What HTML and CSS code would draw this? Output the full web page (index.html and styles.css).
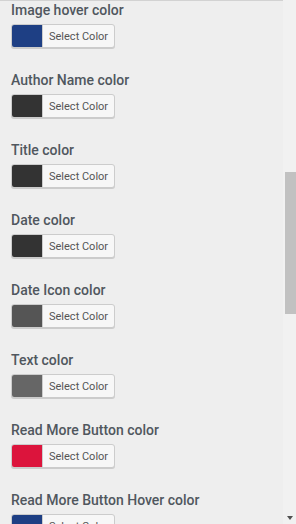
FILE: index.html
```html
<!DOCTYPE html>
<html lang="en">
  <head>
    <meta charset="UTF-8" />
    <meta name="viewport" content="width=device-width, initial-scale=1.0" />
    <title>Color settings</title>
    <link rel="stylesheet" href="styles.css">
  </head>
  <body>
    <div class="settings">
      <div class="field">
        <label class="field-label">Image hover color</label>
        <button class="color-result"><span class="swatch swatch-blue"></span><span class="color-text">Select Color</span></button>
      </div>
      <div class="field">
        <label class="field-label">Author Name color</label>
        <button class="color-result"><span class="swatch swatch-dark"></span><span class="color-text">Select Color</span></button>
      </div>
      <div class="field">
        <label class="field-label">Title color</label>
        <button class="color-result"><span class="swatch swatch-dark"></span><span class="color-text">Select Color</span></button>
      </div>
      <div class="field">
        <label class="field-label">Date color</label>
        <button class="color-result"><span class="swatch swatch-dark"></span><span class="color-text">Select Color</span></button>
      </div>
      <div class="field">
        <label class="field-label">Date Icon color</label>
        <button class="color-result"><span class="swatch swatch-mid"></span><span class="color-text">Select Color</span></button>
      </div>
      <div class="field">
        <label class="field-label">Text color</label>
        <button class="color-result"><span class="swatch swatch-gray"></span><span class="color-text">Select Color</span></button>
      </div>
      <div class="field">
        <label class="field-label">Read More Button color</label>
        <button class="color-result"><span class="swatch swatch-red"></span><span class="color-text">Select Color</span></button>
      </div>
      <div class="field">
        <label class="field-label">Read More Button Hover color</label>
        <button class="color-result"><span class="swatch swatch-blue"></span><span class="color-text">Select Color</span></button>
      </div>
    </div>

    <div class="scrollbar">
      <div class="scroll-thumb"></div>
      <div class="scroll-arrow"></div>
    </div>
  </body>
</html>
```

FILE: styles.css
```css
* {
  margin: 0;
  padding: 0;
  box-sizing: border-box;
}

html,
body {
  height: 100%;
}

body {
  font-family: Roboto, "Noto Sans", sans-serif;
  background: #eeeeee;
  display: flex;
  overflow: hidden;
}

.settings {
  flex: 1;
  border-top: 1px solid #d2d2d2;
  padding: 0 11px;
  display: flex;
  flex-direction: column;
  gap: 23px;
}

.field {
  display: flex;
  flex-direction: column;
  align-items: flex-start;
  gap: 5px;
}

.field-label {
  color: #50575e;
  font-size: 14px;
  font-weight: 500;
  line-height: 18px;
}

.color-result {
  display: flex;
  height: 24px;
  border: 1px solid #cccccc;
  border-radius: 3px;
  background: #f7f7f7;
  box-shadow: 0 1px 0 #cccccc;
  overflow: hidden;
  font-family: inherit;
  cursor: pointer;
}

.swatch {
  width: 30px;
  height: 100%;
}

.swatch-blue {
  background: #1e3f84;
}

.swatch-dark {
  background: #333333;
}

.swatch-mid {
  background: #555555;
}

.swatch-gray {
  background: #666666;
}

.swatch-red {
  background: #dc143c;
}

.color-text {
  display: flex;
  align-items: center;
  padding: 0 6px;
  border-left: 1px solid #cccccc;
  font-size: 11px;
  color: #555555;
}

.scrollbar {
  width: 13px;
  background: #f1f1f1;
  display: flex;
  flex-direction: column;
  align-items: flex-end;
}

.scroll-thumb {
  width: 11px;
  height: 142px;
  margin-top: 172px;
  background: #c1c1c1;
}

.scroll-arrow {
  margin-top: auto;
  margin-bottom: 4px;
  margin-right: 3px;
  border-left: 3.5px solid transparent;
  border-right: 3.5px solid transparent;
  border-top: 4px solid #505050;
}
```
